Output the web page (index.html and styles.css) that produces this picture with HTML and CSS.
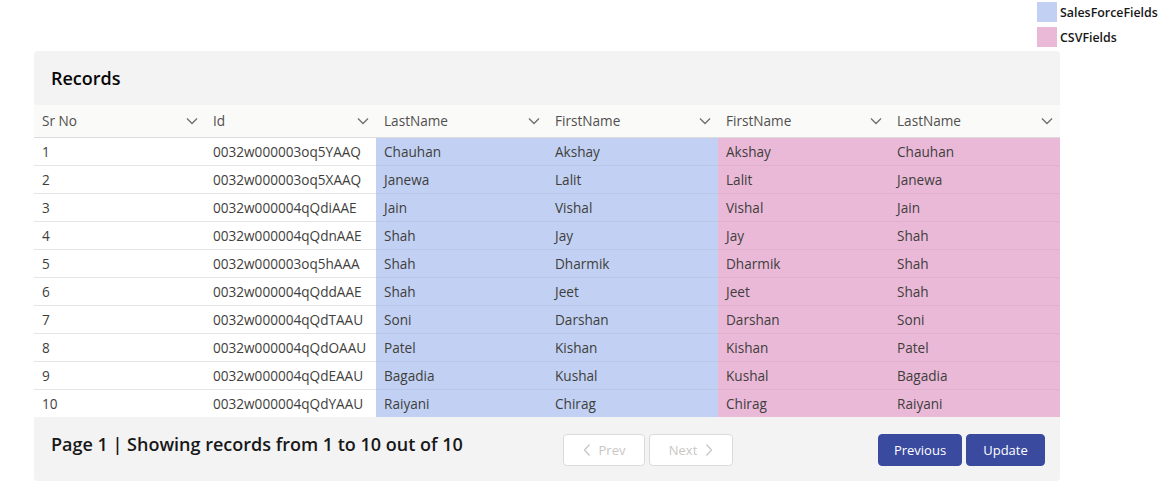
FILE: index.html
```html
<!DOCTYPE html>
<html>
<head>
<meta charset="utf-8">
<link rel="stylesheet" href="styles.css">
</head>
<body>
<div class="page">
  <div class="legend">
    <div class="legend-item"><span class="swatch sf"></span><span>SalesForceFields</span></div>
    <div class="legend-item"><span class="swatch csv"></span><span>CSVFields</span></div>
  </div>
  <div class="card">
    <div class="card-header">Records</div>
    <table class="grid">
      <thead>
        <tr>
          <th><div class="th"><span>Sr No</span><svg class="chev" viewBox="0 0 12 8"><path d="M1 1.5l5 5 5-5" /></svg></div></th>
          <th><div class="th"><span>Id</span><svg class="chev" viewBox="0 0 12 8"><path d="M1 1.5l5 5 5-5" /></svg></div></th>
          <th><div class="th"><span>LastName</span><svg class="chev" viewBox="0 0 12 8"><path d="M1 1.5l5 5 5-5" /></svg></div></th>
          <th><div class="th"><span>FirstName</span><svg class="chev" viewBox="0 0 12 8"><path d="M1 1.5l5 5 5-5" /></svg></div></th>
          <th><div class="th"><span>FirstName</span><svg class="chev" viewBox="0 0 12 8"><path d="M1 1.5l5 5 5-5" /></svg></div></th>
          <th><div class="th"><span>LastName</span><svg class="chev" viewBox="0 0 12 8"><path d="M1 1.5l5 5 5-5" /></svg></div></th>
        </tr>
      </thead>
      <tbody>
        <tr><td>1</td><td>0032w000003oq5YAAQ</td><td class="b">Chauhan</td><td class="b">Akshay</td><td class="p">Akshay</td><td class="p">Chauhan</td></tr>
        <tr><td>2</td><td>0032w000003oq5XAAQ</td><td class="b">Janewa</td><td class="b">Lalit</td><td class="p">Lalit</td><td class="p">Janewa</td></tr>
        <tr><td>3</td><td>0032w000004qQdiAAE</td><td class="b">Jain</td><td class="b">Vishal</td><td class="p">Vishal</td><td class="p">Jain</td></tr>
        <tr><td>4</td><td>0032w000004qQdnAAE</td><td class="b">Shah</td><td class="b">Jay</td><td class="p">Jay</td><td class="p">Shah</td></tr>
        <tr><td>5</td><td>0032w000003oq5hAAA</td><td class="b">Shah</td><td class="b">Dharmik</td><td class="p">Dharmik</td><td class="p">Shah</td></tr>
        <tr><td>6</td><td>0032w000004qQddAAE</td><td class="b">Shah</td><td class="b">Jeet</td><td class="p">Jeet</td><td class="p">Shah</td></tr>
        <tr><td>7</td><td>0032w000004qQdTAAU</td><td class="b">Soni</td><td class="b">Darshan</td><td class="p">Darshan</td><td class="p">Soni</td></tr>
        <tr><td>8</td><td>0032w000004qQdOAAU</td><td class="b">Patel</td><td class="b">Kishan</td><td class="p">Kishan</td><td class="p">Patel</td></tr>
        <tr><td>9</td><td>0032w000004qQdEAAU</td><td class="b">Bagadia</td><td class="b">Kushal</td><td class="p">Kushal</td><td class="p">Bagadia</td></tr>
        <tr><td>10</td><td>0032w000004qQdYAAU</td><td class="b">Raiyani</td><td class="b">Chirag</td><td class="p">Chirag</td><td class="p">Raiyani</td></tr>
      </tbody>
    </table>
    <div class="card-footer">
      <div class="page-info">Page 1 | Showing records from 1 to 10 out of 10</div>
      <div class="pager">
        <button class="btn-nav prev" disabled><svg viewBox="0 0 8 14"><path d="M6.5 1.5L1.5 7l5 5.5" /></svg><span>Prev</span></button>
        <button class="btn-nav next" disabled><span>Next</span><svg viewBox="0 0 8 14"><path d="M1.5 1.5L6.5 7l-5 5.5" /></svg></button>
      </div>
      <div class="actions">
        <button class="btn-brand w-prev">Previous</button>
        <button class="btn-brand w-upd">Update</button>
      </div>
    </div>
  </div>
</div>
</body>
</html>
```

FILE: styles.css
```css
* { box-sizing: border-box; }
html, body { margin: 0; padding: 0; background: #ffffff; }
body {
  font-family: "Open Sans", "Noto Sans", sans-serif;
  font-size: 13px;
  color: #3e3e3c;
}
.page {
  display: flex;
  flex-direction: column;
  padding: 2px 0 0 34px;
}
.legend {
  align-self: flex-end;
  display: flex;
  flex-direction: column;
  gap: 5px;
  width: 128px;
}
.legend-item {
  display: flex;
  align-items: center;
  gap: 3px;
  height: 20px;
  font-size: 12.4px;
  font-weight: 600;
  color: #181818;
}
.swatch {
  width: 20px;
  height: 20px;
  display: block;
}
.swatch.sf { background: #c2d1f3; }
.swatch.csv { background: #ebb9d8; }

.card {
  width: 1026px;
  margin-top: 4px;
  background: #f3f3f3;
  border-radius: 4px;
  overflow: hidden;
}
.card-header {
  height: 54px;
  display: flex;
  align-items: center;
  padding-left: 17px;
  font-size: 18px;
  font-weight: 600;
  color: #080707;
}
.grid {
  width: 100%;
  border-collapse: collapse;
  table-layout: fixed;
  font-size: 13.6px;
}
.grid th {
  height: 32px;
  padding: 0;
  background: #fafaf9;
  font-weight: 400;
  color: #514f4d;
  text-align: left;
  border-bottom: 1px solid #dddbda;
}
.th {
  display: flex;
  align-items: center;
  justify-content: space-between;
  padding: 0 7px 0 8px;
}
.chev {
  width: 12px;
  height: 8px;
  fill: none;
  stroke: #706e6b;
  stroke-width: 1.3;
}
.grid td {
  height: 28px;
  padding: 0 8px;
  background: #ffffff;
  border-bottom: 1px solid #e5e5e5;
  white-space: nowrap;
}
.grid td.b { background: #c2d1f3; border-bottom-color: #b9c7e8; }
.grid td.p { background: #ebb9d8; border-bottom-color: #e0b0ce; }
.grid tbody tr:last-child td { border-bottom: none; }

.card-footer {
  height: 64px;
  display: grid;
  grid-template-columns: 512px auto 1fr;
  align-items: start;
  padding: 14px 15px 0 17px;
}
.page-info {
  font-size: 18px;
  font-weight: 600;
  color: #181818;
  line-height: 26px;
}
.pager {
  display: flex;
  gap: 4px;
  margin-top: 3px;
}
.btn-nav {
  height: 32px;
  background: #ffffff;
  border: 1px solid #dddbda;
  border-radius: 4px;
  color: #c9c7c5;
  font-family: inherit;
  font-size: 13px;
  display: flex;
  align-items: center;
  justify-content: center;
  gap: 8px;
  padding: 0;
}
.btn-nav.prev { width: 82px; }
.btn-nav.next { width: 84px; }
.btn-nav svg {
  width: 8px;
  height: 14px;
  fill: none;
  stroke: #c9c7c5;
  stroke-width: 1.3;
}
.actions {
  justify-self: end;
  display: flex;
  gap: 4px;
  margin-top: 3px;
}
.btn-brand {
  height: 32px;
  background: #3a4a9f;
  border: 1px solid #3a4a9f;
  border-radius: 4px;
  color: #ffffff;
  font-family: inherit;
  font-size: 13px;
  padding: 0;
}
.w-prev { width: 84px; }
.w-upd { width: 79px; }
```
